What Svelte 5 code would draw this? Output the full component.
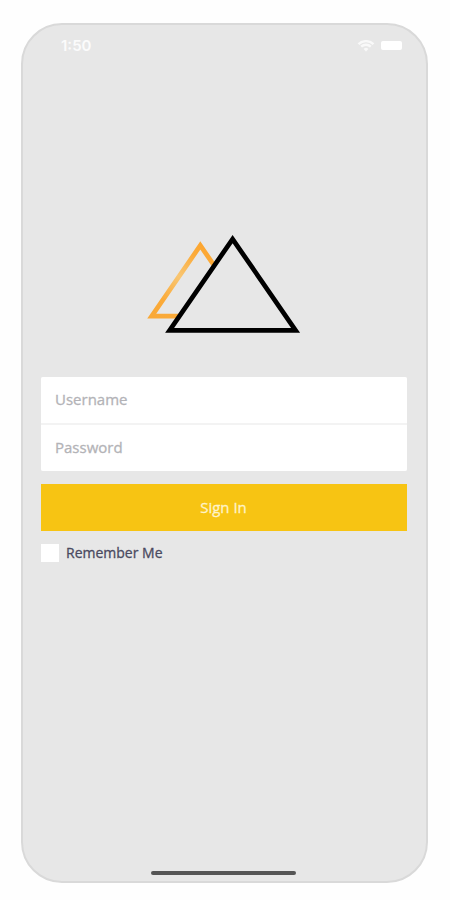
<script>
  let username = $state('');
  let password = $state('');
  let remember = $state(false);

  function signIn(event) {
    event.preventDefault();
  }
</script>

<div class="phone">
  <header class="status-bar">
    <span class="time">1:50</span>
    <div class="status-icons">
      <svg class="wifi" viewBox="0 0 18 12" aria-hidden="true">
        <path d="M1.5 4.1a11 11 0 0 1 15 0" />
        <path d="M4.2 6.7a7 7 0 0 1 9.6 0" />
        <path class="dot" d="M9 11.5 6.6 9a3.5 3.5 0 0 1 4.8 0Z" />
      </svg>
      <span class="battery"></span>
    </div>
  </header>

  <main>
    <svg class="logo" viewBox="0 0 154 100" aria-label="Logo">
      <defs>
        <linearGradient id="peak" gradientUnits="userSpaceOnUse" x1="5" y1="82" x2="54" y2="10">
          <stop offset="0" stop-color="#f9a938" />
          <stop offset="0.22" stop-color="#fbaa38" />
          <stop offset="0.55" stop-color="#f8c673" />
          <stop offset="0.85" stop-color="#fbab3a" />
          <stop offset="1" stop-color="#fca631" />
        </linearGradient>
      </defs>
      <path class="back" d="M102.2 82.1H4.7L53.3 11.5Z" />
      <path class="front" d="M85.6 5.1 148.6 96.3H22.6Z" />
    </svg>

    <form onsubmit={signIn}>
      <div class="fields">
        <input type="text" placeholder="Username" bind:value={username} />
        <input type="password" placeholder="Password" bind:value={password} />
      </div>
      <button type="submit">Sign In</button>
      <label>
        <input type="checkbox" bind:checked={remember} />
        <span>Remember Me</span>
      </label>
    </form>
  </main>

  <div class="home-indicator"></div>
</div>

<style>
  :global(body) {
    background: #fefefe;
  }

  .phone {
    box-sizing: border-box;
    display: flex;
    flex-direction: column;
    width: 407px;
    height: 860px;
    margin: 23px 0 0 21px;
    border: 2px solid #d9d9d9;
    border-radius: 41px;
    background: #e7e7e7;
    font-family: 'Open Sans', 'Noto Sans', sans-serif;
  }

  .status-bar {
    display: flex;
    align-items: center;
    justify-content: space-between;
    height: 20px;
    margin: 11px 24px 0 38px;
    color: #fbfbfb;
  }

  .time {
    font-family: Inter, sans-serif;
    font-size: 15px;
    font-weight: 600;
    line-height: 20px;
  }

  .status-icons {
    display: flex;
    align-items: center;
    gap: 6px;
    padding-bottom: 1px;
  }

  .wifi {
    width: 18px;
    height: 12px;
    fill: none;
    stroke: #f9f9f9;
    stroke-width: 2.4;
  }

  .wifi .dot {
    fill: #f9f9f9;
    stroke: none;
  }

  .battery {
    width: 21px;
    height: 9px;
    border-radius: 2px;
    background: #fff;
  }

  main {
    flex: 1;
    display: flex;
    flex-direction: column;
    padding: 178px 19px 0 18px;
  }

  .logo {
    width: 154px;
    height: 100px;
    margin-left: 106px;
  }

  .logo path {
    stroke-width: 4.7;
    stroke-miterlimit: 10;
  }

  .back {
    fill: none;
    stroke: url(#peak);
  }

  .front {
    fill: #e7e7e7;
    stroke: #000;
  }

  form {
    display: flex;
    flex-direction: column;
    margin-top: 43px;
    -webkit-text-stroke: 0.3px;
  }

  .fields {
    display: flex;
    flex-direction: column;
    gap: 2px;
    overflow: hidden;
    border-radius: 2px;
    background: #f3f3f3;
  }

  .fields input {
    box-sizing: border-box;
    width: 100%;
    height: 46px;
    padding: 0 14px 2px;
    border: none;
    outline: none;
    background: #fff;
    font: 500 15px 'Open Sans', 'Noto Sans', sans-serif;
  }

  .fields input::placeholder {
    color: #b3b3b7;
    opacity: 1;
  }

  button {
    height: 47px;
    margin-top: 13px;
    padding: 0 1px 2px 0;
    border: none;
    background: #f7c413;
    color: #fff3c8;
    font: 500 15px 'Open Sans', 'Noto Sans', sans-serif;
    cursor: pointer;
  }

  label {
    display: flex;
    align-items: center;
    gap: 7px;
    height: 18px;
    margin-top: 13px;
    color: #4a4a60;
    font-size: 14px;
    font-weight: 500;
    line-height: 16px;
  }

  label span {
    padding-bottom: 1px;
  }

  label input {
    appearance: none;
    width: 18px;
    height: 18px;
    margin: 0;
    background: #fff;
  }

  label input:checked {
    box-shadow: inset 0 0 0 4px #fff;
    background: #f7c413;
  }

  .home-indicator {
    align-self: center;
    width: 145px;
    height: 4px;
    margin: 0 2px 6px 0;
    border-radius: 2px;
    background: #555;
  }
</style>
